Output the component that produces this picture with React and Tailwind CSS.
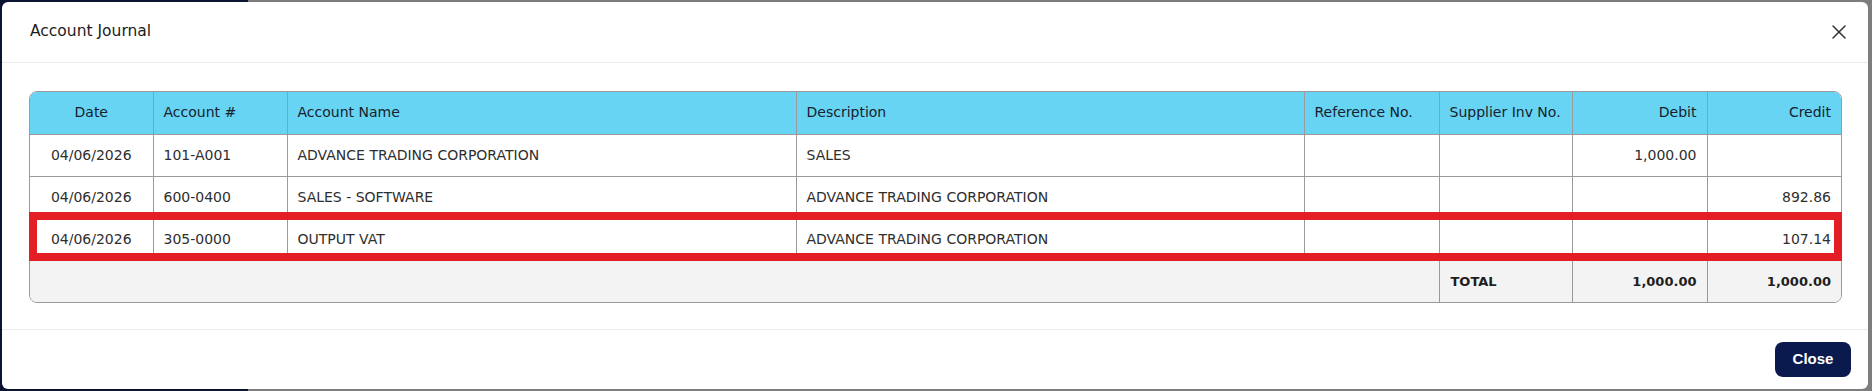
import React from "react";
import { X } from "lucide-react";

const rows = [
  { date: "04/06/2026", acct: "101-A001", name: "ADVANCE TRADING CORPORATION", desc: "SALES", debit: "1,000.00", credit: "" },
  { date: "04/06/2026", acct: "600-0400", name: "SALES - SOFTWARE", desc: "ADVANCE TRADING CORPORATION", debit: "", credit: "892.86" },
  { date: "04/06/2026", acct: "305-0000", name: "OUTPUT VAT", desc: "ADVANCE TRADING CORPORATION", debit: "", credit: "107.14" },
];

const cell = "border-r border-b border-[#9a9a9a] px-[10px]";

const App = () => {
  return (
    <div className="w-full h-[391px] pt-[2px] pl-[2px] bg-[linear-gradient(to_right,#0a1430_248px,#7d7d7d_248px)] font-['DejaVu_Sans',sans-serif]">
      <div className="w-[1866px] h-[387px] bg-white rounded-[6px] flex flex-col">
        {/* header */}
        <div className="h-[61px] flex items-center justify-between pl-[28px] pr-[17px] border-b border-[#e9ecef]">
          <h2 className="text-[15.5px] text-[#1c1c1c]">Account Journal</h2>
          <button className="w-[24px] h-[24px] flex items-center justify-center text-[#333]">
            <X size={24} strokeWidth={1.5} />
          </button>
        </div>

        {/* body */}
        <div className="flex-1 pt-[28px] pl-[27px] pr-[26px]">
          <div className="relative">
            <div className="rounded-[8px] border border-[#9a9a9a] overflow-hidden">
              <table className="w-full table-fixed border-collapse text-[14px] text-[#2e2e2e] whitespace-nowrap">
                <colgroup>
                  <col className="w-[123px]" />
                  <col className="w-[134px]" />
                  <col className="w-[509px]" />
                  <col className="w-[508px]" />
                  <col className="w-[135px]" />
                  <col className="w-[133px]" />
                  <col className="w-[135px]" />
                  <col className="w-[134px]" />
                </colgroup>
                <thead>
                  <tr className="bg-[#66d4f2] text-[#16212e] h-[42px]">
                    <th className={`${cell} font-normal text-center`}>Date</th>
                    <th className={`${cell} font-normal text-left`}>Account #</th>
                    <th className={`${cell} font-normal text-left`}>Account Name</th>
                    <th className={`${cell} font-normal text-left`}>Description</th>
                    <th className={`${cell} font-normal text-left`}>Reference No.</th>
                    <th className={`${cell} font-normal text-left`}>Supplier Inv No.</th>
                    <th className={`${cell} font-normal text-right`}>Debit</th>
                    <th className="border-b border-[#9a9a9a] px-[10px] font-normal text-right">Credit</th>
                  </tr>
                </thead>
                <tbody>
                  {rows.map((r, i) => (
                    <tr key={i} className="h-[42px]">
                      <td className={`${cell} text-center`}>{r.date}</td>
                      <td className={cell}>{r.acct}</td>
                      <td className={cell}>{r.name}</td>
                      <td className={cell}>{r.desc}</td>
                      <td className={cell}></td>
                      <td className={cell}></td>
                      <td className={`${cell} text-right`}>{r.debit}</td>
                      <td className="border-b border-[#9a9a9a] px-[10px] text-right">{r.credit}</td>
                    </tr>
                  ))}
                  <tr className="h-[42px] bg-[#f3f3f3] text-[13px] font-bold text-[#1e1e1e]">
                    <td colSpan={5} className="border-r border-[#9a9a9a]"></td>
                    <td className="border-r border-[#9a9a9a] px-[11px]">TOTAL</td>
                    <td className="border-r border-[#9a9a9a] px-[10px] text-right">1,000.00</td>
                    <td className="px-[10px] text-right">1,000.00</td>
                  </tr>
                </tbody>
              </table>
            </div>
            {/* highlighted row */}
            <div className="absolute left-0 right-0 top-[121px] h-[49px] border-[8px] border-[#e41e25]"></div>
          </div>
        </div>

        {/* footer */}
        <div className="h-[60px] flex items-center justify-end pr-[17px] border-t border-[#e9ecef]">
          <button className="w-[76px] h-[35px] rounded-[8px] bg-[#0a1a4f] text-white text-[15px] font-bold font-['Liberation_Sans',Arial,sans-serif]">
            Close
          </button>
        </div>
      </div>
    </div>
  );
};

export default App;
